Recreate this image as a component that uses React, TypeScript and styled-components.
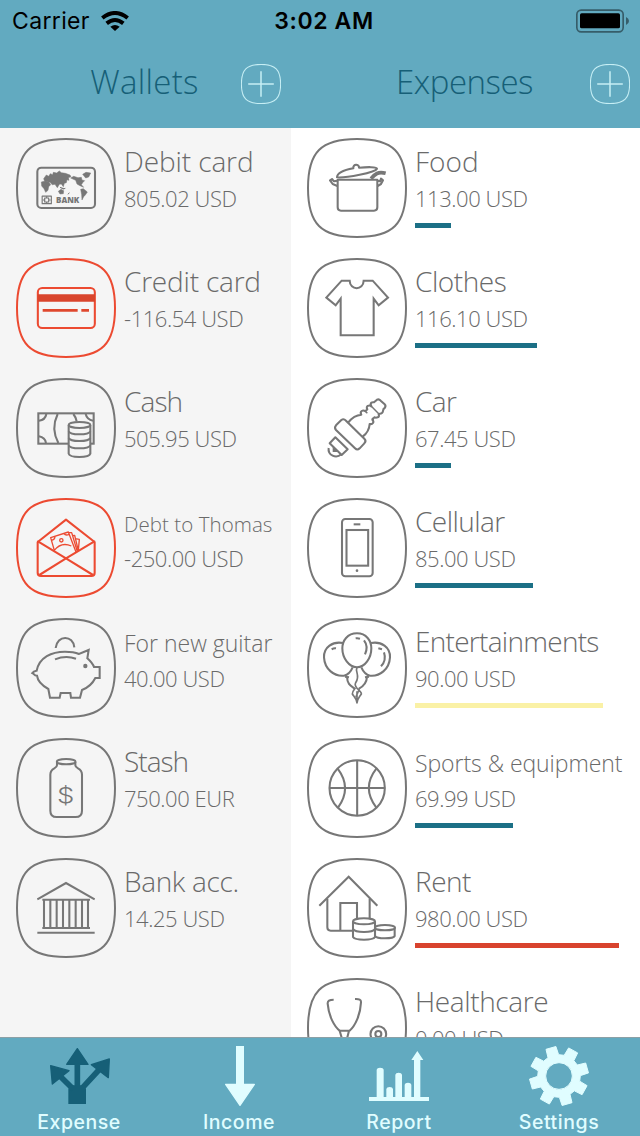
import React from "react";
import styled, { createGlobalStyle } from "styled-components";

const GRAY = "#777777";
const RED = "#ec4a31";
const TEAL = "#1c7086";
const DEEP = "#165f77";
const ICE = "#e0fdff";
const BAR = "#62aac0";
const PANEL = "#f5f5f5";

const Global = createGlobalStyle`
  *, *::before, *::after { box-sizing: border-box; }
  body { margin: 0; background: #fff; }
`;

const Screen = styled.div`
  width: 640px;
  height: 1136px;
  display: flex;
  flex-direction: column;
  overflow: hidden;
  font-family: "Open Sans", "Noto Sans", sans-serif;
  font-weight: 300;
  color: #6a6a6a;
`;

const StatusBar = styled.div`
  height: 40px;
  flex: none;
  display: grid;
  grid-template-columns: 1fr auto 1fr;
  align-items: center;
  padding: 1px 10px 0 12px;
  background: ${BAR};
  color: #000;
  font-family: Inter, "Liberation Sans", sans-serif;
  font-size: 23px;
  font-weight: 400;
`;

const Carrier = styled.div`
  display: flex;
  align-items: center;
  gap: 11px;
  letter-spacing: 0.35px;
`;

const Clock = styled.div`
  padding-left: 6px;
  font-weight: 600;
  letter-spacing: 0.6px;
`;

const BatterySlot = styled.div`
  display: flex;
  justify-content: flex-end;
`;

const Header = styled.div`
  height: 88px;
  flex: none;
  display: grid;
  grid-template-columns: 291px 349px;
  background: ${BAR};
`;

const HeaderCell = styled.div`
  display: grid;
  grid-template-columns: 50px 1fr 50px;
  align-items: start;
  padding-top: 24px;
`;

const HeaderTitle = styled.h1<{ $spacing: number }>`
  margin: -5px 0 0 -2px;
  text-align: center;
  font-size: 33px;
  line-height: 46px;
  font-weight: 300;
  color: ${DEEP};
  letter-spacing: ${(p) => p.$spacing}px;
  white-space: nowrap;
`;

const AddButton = styled.button`
  width: 40px;
  height: 40px;
  padding: 0;
  border: 0;
  background: none;
  display: block;
`;

const Columns = styled.div`
  flex: 1;
  min-height: 0;
  display: grid;
  grid-template-columns: 291px 349px;
  overflow: hidden;
`;

const Column = styled.div<{ $tone: string }>`
  background: ${(p) => p.$tone};
  padding: 10px 0 0 16px;
  display: flex;
  flex-direction: column;
  gap: 20px;
`;

const Row = styled.div`
  height: 100px;
  flex: none;
  display: flex;
  gap: 8px;
`;

const IconFrame = styled.svg`
  width: 100px;
  height: 100px;
  flex: none;
  fill: none;
  stroke-linecap: butt;
  stroke-linejoin: round;
`;

const Info = styled.div`
  display: flex;
  flex-direction: column;
  white-space: nowrap;
`;

const TitleLine = styled.div`
  height: 44px;
  padding-top: 3px;
  font-size: 28px;
  line-height: 40px;
`;

const Title = styled.span<{ $size: number; $spacing: number }>`
  font-size: ${(p) => p.$size}px;
  line-height: 1;
  letter-spacing: ${(p) => p.$spacing}px;
`;

const Amount = styled.div`
  height: 41px;
  font-size: 22px;
  line-height: 33px;
  letter-spacing: -0.45px;
`;

const Meter = styled.div<{ $tone: string }>`
  height: 5px;
  background: ${(p) => p.$tone};
`;

const TabBar = styled.nav`
  height: 99px;
  flex: none;
  display: grid;
  grid-template-columns: repeat(4, 160px);
  border-top: 1px solid #8ca0a6;
  background: ${BAR};
`;

const Tab = styled.div`
  display: flex;
  flex-direction: column;
  align-items: center;
  padding: 8px 2px 0 0;
  color: ${ICE};
  font-family: Inter, "Liberation Sans", sans-serif;
  font-size: 19.5px;
  font-weight: 500;
  line-height: 24px;
  letter-spacing: 0.55px;
`;

const TabIcon = styled.svg`
  width: 60px;
  height: 60px;
  margin-bottom: 4px;
  overflow: visible;
`;

const SQUIRCLE =
  "M50 1 C86 1 99 14 99 50 C99 86 86 99 50 99 C14 99 1 86 1 50 C1 14 14 1 50 1Z";

/* Icon art is drawn on a 300-unit grid whose origin differs per column and parity. */
const art: Record<string, { dx: number; dy: number; node: React.ReactNode }> = {
  debit: {
    dx: 48,
    dy: 30,
    node: (
      <>
        <rect x="112" y="119" width="173" height="121" rx="12" />
        <g fill={GRAY} strokeWidth="1.5">
          <path d="M131 152 L139 141 L146 145 L151 137 L158 140 L160 133 L170 135 L178 129 L184 134 L196 136 L210 141 L213 146 L205 149 L207 157 L201 155 L199 164 L193 166 L190 176 L184 168 L178 169 L172 179 L165 169 L157 170 L150 163 L142 161 L134 160Z" />
          <path d="M124 162 L136 159 L147 163 L152 170 L146 176 L144 187 L137 193 L132 182 L125 174Z" />
          <path d="M175 190 L183 184 L191 188 L190 197 L180 198Z" />
          <path d="M212 150 L221 145 L234 149 L244 148 L246 156 L254 158 L249 163 L244 170 L251 178 L240 173 L231 168 L227 157Z" />
          <path d="M248 139 L258 133 L272 135 L266 147 L257 150Z" />
          <path d="M242 184 L250 182 L262 192 L256 201 L251 206 L246 216 L245 200Z" />
          <path d="M180 178 L190 183 L196 181 M204 199 L208 194 M198 145 L205 152" strokeWidth="3" />
        </g>
        <g strokeWidth="3.4">
          <path d="M126.500 204.500 H154 V227 H126.500Z" />
          <path d="M134 210 H146 V222 H134Z M128 216 H136 M145 216 H152 M140 205 V211 M140 221 V227" />
        </g>
        <text x="168" y="225" fill={GRAY} stroke="none" fontFamily="Open Sans, sans-serif" fontWeight="800" fontSize="24" textLength="70">
          BANK
        </text>
      </>
    ),
  },
  credit: {
    dx: 48,
    dy: 390,
    node: (
      <>
        <rect x="113.500" y="480" width="171" height="120" rx="13" />
        <path d="M113 510 H285" stroke="#d9452c" strokeWidth="23" />
        <path d="M128 547 H233 M244 547 H267" stroke="#df482e" strokeWidth="8" />
      </>
    ),
  },
  cash: {
    dx: 48,
    dy: 30,
    node: (
      <>
        <rect x="115" y="136" width="166" height="91" strokeLinejoin="miter" />
        <path d="M139 138 Q136 156 117 158 M257 138 Q261 155 279 158 M117 205 Q135 208 138 225" />
        <path d="M173 138 Q152 182 175 225 M220 138 Q228 148 230 160" />
        <path d="M206 171 V257 Q208 267 238 267 Q268 267 271 257 V171" fill={PANEL} />
        <ellipse cx="238.500" cy="171" rx="32.500" ry="9" fill={PANEL} />
        <path d="M206 190 Q210 199 238 199 Q267 199 271 190 M206 210 Q210 219 238 219 Q267 219 271 210 M206 232 Q210 241 238 241 Q267 241 271 232" />
      </>
    ),
  },
  envelope: {
    dx: 48,
    dy: 390,
    node: (
      <>
        <path d="M113 523 V614 Q113 624 123 624 H274 Q284 624 284 614 V523 Q284 520 280 519 L198 455 L117 519 Q113 520 113 523Z" />
        <path d="M115 521 L198 571 L282 521 M118 621 L198 571 L279 621" />
        <g strokeWidth="4">
          <path d="M163 547 L152 509 L205 492 L228 552 M162 548 Q184 520 214 534" />
          <circle cx="184" cy="517" r="5" />
          <path d="M154 517 Q164 516 165 506 M192 497 Q197 504 208 499 M206 494 L215 494 L232 551 M216 503 L224 502 L235 548 M226 512 L238 514 L235 547" />
        </g>
      </>
    ),
  },
  pig: {
    dx: 48,
    dy: 30,
    node: (
      <>
        <path
          strokeLinejoin="miter"
          d="M110 188 C118 148 155 131 195 131 C215 131 228 134 237 138 L266 126 L262 151 C272 160 279 168 282 177 L299 177 L299 210 L286 210 C278 226 264 239 246 246 L240 269 L213 269 L211 255 L182 255 L179 269 L150 269 L145 243 C125 232 113 220 111 203 C102 203 102 197 97 195 C101 189 104 189 110 188Z"
        />
        <circle cx="256" cy="174" r="6.500" fill={GRAY} stroke="none" />
        <path d="M165 154 Q197 141 228 152 M167 120 C171 80 220 80 223 118" />
      </>
    ),
  },
  jar: {
    dx: 48,
    dy: 390,
    node: (
      <>
        <ellipse cx="198.500" cy="461" rx="28" ry="8" />
        <path d="M171 462 V472 Q171 477 163 481 Q151 487 151 500 V608 Q151 627 170 627 H227 Q246 627 246 608 V500 Q246 487 234 481 Q226 477 226 472 V462" />
        <text x="197" y="585" textAnchor="middle" fill={GRAY} stroke="none" fontFamily="Inter, sans-serif" fontWeight="300" fontSize="66" textLength="52" lengthAdjust="spacingAndGlyphs">
          $
        </text>
      </>
    ),
  },
  bank: {
    dx: 48,
    dy: 30,
    node: (
      <>
        <path d="M112 154 L198 105 L284 154" strokeLinejoin="miter" />
        <path d="M127 155.500 H270 M127 240 H270" />
        <path d="M112 254 H284" strokeWidth="6" />
        <path d="M132 155 V240 M151 155 V240 M170 155 V240 M189 155 V240 M208 155 V240 M227 155 V240 M246 155 V240 M264 155 V240" />
      </>
    ),
  },
  pot: {
    dx: 21,
    dy: 30,
    node: (
      <>
        <path d="M111 148 C112 132 138 125 160 121 C158 107 178 107 177 119 C200 117 231 116 231 122 C225 134 138 150 111 148Z" />
        <path d="M113 155 V238 Q113 248 123 248 H222 Q232 248 232 238 V155Z" />
        <path d="M113 158 L102 160 L96 153 L90 157 L98 168 L112 174 M232 158 L240 160 L243 152 L249 157 L243 168 L233 174" />
        <path d="M213 152 C225 138 234 130 257 136" strokeWidth="11" />
      </>
    ),
  },
  shirt: {
    dx: 21,
    dy: 390,
    node: (
      <path
        strokeLinejoin="miter"
        d="M125 458 H149 C150 488 190 488 191 458 H218 L264 509 L236 532 L221 512 V622 H122 V512 L107 532 L79 509Z"
      />
    ),
  },
  plug: {
    dx: 21,
    dy: 30,
    node: (
      <>
        <path d="M108 172 L124 156 Q131 151 138 158 L193 212 Q200 219 193 226 L179 241 Q172 248 165 241 L108 186 Q102 179 108 172Z" />
        <path d="M106 208 L143 244 L125 261 L89 226Z" />
        <path d="M98 233 L117 252 H98Z" fill={GRAY} stroke="none" />
        <path d="M86 240 C83 262 108 273 124 259" />
        <path d="M145 163 C156 149 172 141 184 140 C178 130 189 124 196 130 L202 124 C196 114 208 110 214 115 C208 103 218 102 222 103 L231 95 Q237 92 242 98 L254 109 Q259 114 254 120 C246 124 252 130 246 135 C241 139 238 135 236 139 C240 149 228 150 223 148 L217 155 C224 162 218 170 209 168 C208 184 200 197 188 206" />
        <path d="M196 130 L202 136 M216 150 L221 155 M214 115 L237 138" strokeWidth="4.5" />
      </>
    ),
  },
  phone: {
    dx: 21,
    dy: 390,
    node: (
      <>
        <rect x="126" y="453" width="92" height="172" rx="10" />
        <rect x="139.500" y="486" width="65" height="107" strokeLinejoin="miter" />
        <path d="M161 469 H181" />
        <circle cx="171" cy="608" r="4" fill={GRAY} stroke="none" />
      </>
    ),
  },
  balloons: {
    dx: 21,
    dy: 30,
    node: (
      <>
        <path d="M171 76 C142 76 127 98 127 121 C127 150 147 178 171 178 C195 178 214 150 214 121 C214 98 199 76 171 76Z" />
        <path d="M129 105 C98 99 71 118 72 148 C74 184 103 206 132 203 C146 200 152 192 158 178" />
        <path d="M213 105 C244 99 271 118 270 148 C268 184 239 206 210 203 C196 200 190 192 184 178" />
        <path d="M95 124 Q101 120 108 121 M167 91 Q174 90 180 92 M192 97 Q206 115 195 139 M235 121 L246 124 M252 133 Q260 157 243 175" />
        <path d="M135 206 L147 208 M207 206 L195 208 M141 207 C142 230 154 234 164 242 M201 207 C200 225 188 236 177 242" />
        <path d="M171 178 C164 192 182 202 167 224 C158 240 186 248 184 258 C178 268 173 270 171 285 C169 270 162 266 157 258 C157 248 164 244 166 240 M171 250 V285 M178 241 C178 250 168 260 168 268" strokeWidth="5" />
      </>
    ),
  },
  ball: {
    dx: 21,
    dy: 390,
    node: (
      <>
        <circle cx="171.500" cy="540" r="83" />
        <path d="M171.500 457 V623 M88 540 H255 M113 482 Q157 540 114 599 M229 482 Q184 540 229 599" />
      </>
    ),
  },
  house: {
    dx: 21,
    dy: 30,
    node: (
      <>
        <path d="M58 173 L146 86 L232 173" strokeLinejoin="miter" />
        <path d="M82 152 V238 Q82 248 92 248 H158 M209 152 V210 M121 248 V165 H171 V212" strokeLinejoin="miter" />
        <path d="M225 239 V264 Q229 271 255 271 Q281 271 284 264 V239" />
        <ellipse cx="255" cy="239" rx="30" ry="8" />
        <path d="M159 220 V267 Q164 275 192 275 Q220 275 225 267 V220" fill="#fff" />
        <ellipse cx="192" cy="220" rx="33" ry="9" />
        <path d="M159 243 Q164 252 192 252 Q220 252 225 243" />
      </>
    ),
  },
  stethoscope: {
    dx: 21,
    dy: 390,
    node: (
      <>
        <path d="M101 455 Q82 455 83 467 C86 504 103 536 120 549 M165 453 Q184 452 183 463 C181 500 166 534 148 549" />
        <path d="M119 548 H147 L140 576 H127Z M133 576 C134 670 236 660 235 582" />
        <circle cx="235" cy="558" r="23.500" />
        <circle cx="235" cy="558" r="9" />
      </>
    ),
  },
};

function ItemIcon({ name, tone }: { name: string; tone: string }) {
  const a = art[name];
  return (
    <IconFrame viewBox="0 0 100 100" stroke={tone}>
      <path d={SQUIRCLE} strokeWidth="2" />
      <g transform={`scale(0.33333) translate(${-a.dx} ${-a.dy})`} strokeWidth="6.2">
        {a.node}
      </g>
    </IconFrame>
  );
}

interface Item {
  icon: string;
  title: string;
  amount: string;
  size?: number;
  spacing?: number;
  red?: boolean;
  bar?: number;
  barTone?: string;
}

const wallets: Item[] = [
  { icon: "debit", title: "Debit card", amount: "805.02 USD", spacing: -0.1 },
  { icon: "credit", title: "Credit card", amount: "-116.54 USD", spacing: -0.2, red: true },
  { icon: "cash", title: "Cash", amount: "505.95 USD", spacing: -0.9 },
  { icon: "envelope", title: "Debt to Thomas", amount: "-250.00 USD", size: 20.5, spacing: 0.05, red: true },
  { icon: "pig", title: "For new guitar", amount: "40.00 USD", size: 23 },
  { icon: "jar", title: "Stash", amount: "750.00 EUR", spacing: -1 },
  { icon: "bank", title: "Bank acc.", amount: "14.25 USD", spacing: -0.35 },
];

const expenses: Item[] = [
  { icon: "pot", title: "Food", amount: "113.00 USD", bar: 36 },
  { icon: "shirt", title: "Clothes", amount: "116.10 USD", spacing: -0.45, bar: 122 },
  { icon: "plug", title: "Car", amount: "67.45 USD", spacing: -0.6, bar: 36 },
  { icon: "phone", title: "Cellular", amount: "85.00 USD", spacing: -0.55, bar: 118 },
  { icon: "balloons", title: "Entertainments", amount: "90.00 USD", spacing: -0.72, bar: 188, barTone: "#faf1a6" },
  { icon: "ball", title: "Sports & equipment", amount: "69.99 USD", size: 23, spacing: -0.06, bar: 98 },
  { icon: "house", title: "Rent", amount: "980.00 USD", spacing: -0.5, bar: 204, barTone: "#d8432e" },
  { icon: "stethoscope", title: "Healthcare", amount: "0.00 USD", spacing: -0.38 },
];

function ItemRow({ item }: { item: Item }) {
  return (
    <Row>
      <ItemIcon name={item.icon} tone={item.red ? RED : GRAY} />
      <Info>
        <TitleLine>
          <Title $size={item.size ?? 28} $spacing={item.spacing ?? 0}>
            {item.title}
          </Title>
        </TitleLine>
        <Amount>{item.amount}</Amount>
        {item.bar !== undefined && (
          <Meter $tone={item.barTone ?? TEAL} style={{ width: item.bar }} />
        )}
      </Info>
    </Row>
  );
}

function Plus() {
  return (
    <AddButton aria-label="Add">
      <svg width="40" height="40" viewBox="0 0 100 100" fill="none" stroke="#c6eef4">
        <path d={SQUIRCLE} strokeWidth="2.6" />
        <path d="M18 50 H82 M50 18 V82" strokeWidth="3.8" />
      </svg>
    </AddButton>
  );
}

const gearPath = (() => {
  const pts: string[] = [];
  const at = (r: number, deg: number) => {
    const t = (deg * Math.PI) / 180;
    return `${(777 + r * Math.cos(t)).toFixed(1)} ${(684 + r * Math.sin(t)).toFixed(1)}`;
  };
  for (let i = 0; i < 8; i++) {
    const c = -106 + i * 45;
    pts.push(at(64, c - 15), at(89, c - 10), at(89, c + 10), at(64, c + 15));
  }
  return `M${pts.join(" L")}Z M817 684 A40 40 0 1 0 737 684 A40 40 0 1 0 817 684Z`;
})();

export default function App() {
  return (
    <Screen>
      <Global />
      <StatusBar>
        <Carrier>
          Carrier
          <svg width="28" height="20" viewBox="0 0 84 60" fill="none" stroke="#000" strokeWidth="12">
            <path d="M4 21 Q42 -9 80 21" />
            <path d="M17 37 Q42 17 67 37" />
            <path d="M42 60 L28 47 Q42 37 56 47Z" fill="#000" stroke="none" />
          </svg>
        </Carrier>
        <Clock>3:02 AM</Clock>
        <BatterySlot>
          <svg width="54" height="24" viewBox="768 26 162 72">
            <rect x="770.500" y="29.500" width="139" height="65" rx="13" fill="none" stroke="#365d69" strokeWidth="5" />
            <rect x="780" y="39" width="120" height="45" rx="5" />
            <path d="M918 50 Q927 54 927 62 Q927 70 918 74Z" fill="#365d69" />
          </svg>
        </BatterySlot>
      </StatusBar>
      <Header>
        <HeaderCell>
          <span />
          <HeaderTitle $spacing={0.3}>Wallets</HeaderTitle>
          <Plus />
        </HeaderCell>
        <HeaderCell>
          <span />
          <HeaderTitle $spacing={-0.5}>Expenses</HeaderTitle>
          <Plus />
        </HeaderCell>
      </Header>
      <Columns>
        <Column $tone={PANEL}>
          {wallets.map((w) => (
            <ItemRow key={w.title} item={w} />
          ))}
        </Column>
        <Column $tone="#ffffff">
          {expenses.map((e) => (
            <ItemRow key={e.title} item={e} />
          ))}
        </Column>
      </Columns>
      <TabBar>
        <Tab>
          <TabIcon viewBox="147 594 180 180" fill={DEEP} stroke={DEEP} strokeLinejoin="round">
            <path d="M205 768 V722 L216 712 H248 L258 722 V768Z" stroke="none" />
            <path d="M232 720 V645 M176 680 L220 724 M302 660 L243 724" strokeWidth="17" />
            <path d="M232 602 L264 649 H200Z M152 653 L207 668 L157 708Z M328 633 L325 689 L274 650Z" strokeWidth="4" />
          </TabIcon>
          Expense
        </Tab>
        <Tab>
          <TabIcon viewBox="627 594 180 180" fill={ICE} stroke={ICE} strokeLinejoin="round">
            <path d="M708 594 H732 V712 H708Z" stroke="none" />
            <path d="M677 709 H763 L720 772Z" strokeWidth="4" />
          </TabIcon>
          Income
        </Tab>
        <Tab>
          <TabIcon viewBox="207 594 180 180" fill={ICE}>
            <path d="M207 747 H387 V759 H207Z" />
            <path d="M230 750 V665 Q231 659 240 659 Q250 659 251 665 V750Z M259 750 V723 Q260 717 269 717 Q278 717 279 723 V750Z M286 750 V680 Q287 674 296 674 Q305 674 306 680 V750Z M314 750 V710 Q315 704 324 704 Q333 704 334 710 V750Z" />
            <path d="M342 750 V636 H334 L352 609 L370 636 H361 V750Z" />
          </TabIcon>
          Report
        </Tab>
        <Tab>
          <TabIcon viewBox="687 594 180 180" fill={ICE}>
            <path fillRule="evenodd" d={gearPath} stroke={ICE} strokeWidth="3" strokeLinejoin="round" />
          </TabIcon>
          Settings
        </Tab>
      </TabBar>
    </Screen>
  );
}
